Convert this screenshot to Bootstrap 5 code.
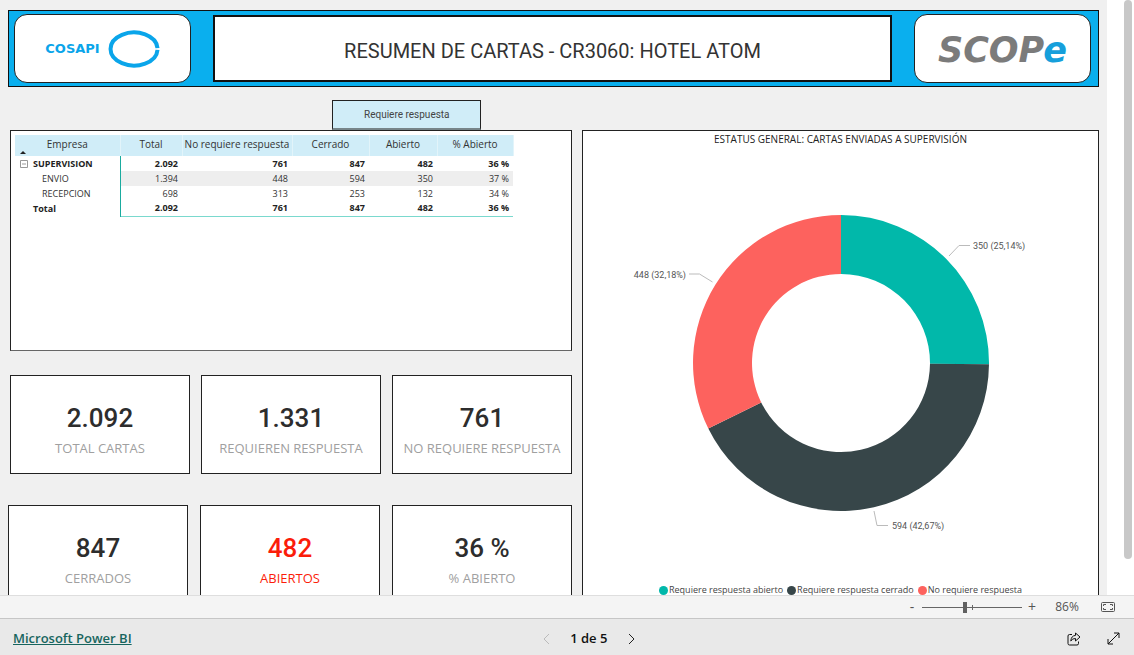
<!DOCTYPE html>
<html lang="es">
<head>
<meta charset="utf-8">
<meta name="viewport" content="width=device-width, initial-scale=1">
<title>Resumen de cartas</title>
<link href="https://cdn.jsdelivr.net/npm/bootstrap@5.3.0/dist/css/bootstrap.min.css" rel="stylesheet">
<style>
  :root { --din: Roboto, "Liberation Sans", sans-serif; --ui: "Open Sans", "Noto Sans", sans-serif; }
  body { font-family: var(--ui); color: #333; font-size: 14px; background: #fff; }
  .stage { min-height: 0; }
  .report { background: #f0f0f0; padding: 10px 8px 0; }
  .rail { width: 27px; padding-right: 2px; }
  .rail-thumb { width: 8px; height: 94%; background: #c8c8c8; border-radius: 4px; }
  .banner { background: #0aafee; border: 1px solid #111; height: 77px; padding: 3px 7px 3px 5px; gap: 22px; }
  .logo-box { width: 177px; background: #fff; border: 1px solid #222; border-radius: 13px; }
  .banner-title { border: 2px solid #111; background: #fff; margin: 1px 0; font: 400 20px/24px var(--din); padding-top: 4px; }
  .cosapi { font: 700 13px/16px "DejaVu Sans", sans-serif; color: #0aa5ea; }
  .scope { font: italic 700 35px/40px "DejaVu Sans", sans-serif; color: #7b7b7b; padding-top: 2px; }
  .scope span { color: #169fdb; }
  .board { display: grid; grid-template-columns: 564fr 517fr; column-gap: 10px; margin-top: 13px; }
  .inset { margin-left: 2px; }
  .btn-filter { width: 149px; height: 30px; margin-left: 57.5%; padding: 0; border: 1px solid #222; border-bottom: 2px solid #77858a; border-radius: 0; background: #d0edf8; font: 400 10px/28px var(--din); color: #444; }
  .btn-filter:hover { background: #bfe5f4; border-color: #222; }
  .panel { background: #fff; border: 1px solid #222; }
  .matrix-panel { height: 221px; padding: 4px; border-bottom-color: #666; }
  .matrix { width: 498px; table-layout: fixed; font-size: 9px; line-height: 14px; }
  .matrix th, .matrix td { height: 15px; padding: 0 4px 0 0; text-align: right; font-weight: 400; }
  .matrix thead th { background: #d0edf8; height: 21px; text-align: center; vertical-align: top; padding: 2px 0 0; font-size: 10px; border-right: 1px solid #e2f4fa; }
  .matrix thead th:first-child { position: relative; }
  .sort-mark { position: absolute; left: 5px; bottom: 2px; border: 3px solid transparent; border-top: 0; border-bottom-color: #222; }
  .matrix tbody th { text-align: left; padding-left: 27px; border-right: 1px solid #1aab9f; }
  .matrix .strong-row th, .matrix .strong-row td { font-weight: 700; color: #222; }
  .matrix .strong-row th { padding-left: 18px; }
  .matrix tbody .group-row th { padding-left: 5px; }
  .matrix .alt-row td { background: #eee; }
  .matrix tbody tr:last-child td { border-bottom: 1px solid #7ad9ce; }
  .toggle { display: inline-flex; width: 13px; padding: 0; border: 0; background: none; vertical-align: -1px; }
  .kpis { display: grid; grid-template-columns: repeat(3, 1fr); }
  .kpis-top { gap: 11px; margin-top: 24px; }
  .kpis-low { gap: 12px; margin-top: 31px; }
  .kpi { height: 99px; padding-top: 27px; text-align: center; white-space: nowrap; }
  .kpi-num { font: 500 26px/31px var(--din); color: #2d2d2d; }
  .kpi-label { font-size: 13px; line-height: 28px; color: #a0a0a0; }
  .kpi-alert * { color: #fb1d0a; }
  .chart-panel { margin-top: 30px; height: 480px; }
  .chart-title { font-size: 10px; line-height: 16px; color: #222; text-align: center; margin: 0; }
  .chart-panel svg { display: block; width: 100%; height: 434px; }
  .chart-panel text { font: 400 9px var(--din); fill: #555; }
  .legend-row { gap: 4px; font-size: 9px; line-height: 18px; color: #444; }
  .legend-row li { display: flex; align-items: center; gap: 1px; }
  .dot { width: 9px; height: 9px; border-radius: 50%; }
  .zoombar { height: 23px; background: #f4f4f4; border-top: 1px solid #dedede; padding-right: 19px; color: #555; }
  .plain { border: 0; background: none; padding: 0; color: inherit; display: inline-flex; justify-content: center; align-items: center; }
  .step { width: 14px; font-size: 14px; line-height: 16px; }
  .zoom-track { width: 100px; margin: 0 3px; position: relative; display: flex; }
  .zoom-track::after { content: ""; position: absolute; left: 50px; top: 6px; width: 1px; height: 5px; background: #666; }
  .zoom-track input { width: 100%; height: 16px; margin: 0; appearance: none; background: linear-gradient(#666, #666) center / 100% 1px no-repeat; }
  .zoom-track input::-webkit-slider-thumb { appearance: none; width: 4px; height: 11px; background: #606060; }
  .zoom-value { width: 34px; margin: 0 17px 0 11px; font-size: 12px; text-align: center; }
  .footer { height: 37px; background: #e9e9e9; border-top: 1px solid #c6c6c6; padding: 3px 0 0 13px; color: #111; }
  .footer a { color: #17655e; font-size: 13px; font-weight: 600; }
  .pager { gap: 18px; font-size: 13px; font-weight: 600; }
  .pager button { width: 12px; height: 24px; }
  .tools button { width: 40px; height: 32px; }
</style>
</head>
<body class="vh-100 d-flex flex-column overflow-hidden">
<main class="stage d-flex flex-fill overflow-hidden">
  <div class="report flex-fill overflow-hidden">
    <header class="banner d-flex">
      <div class="logo-box d-flex align-items-center justify-content-center gap-2">
        <span class="cosapi">COSAPI</span>
        <svg width="52" height="38" viewBox="0 0 52 38" fill="none" stroke="#0aa5ea" stroke-width="4" aria-hidden="true"><path d="M49.500 18.200A23.500 16.500 0 1 0 49.500 19.800"/></svg>
      </div>
      <h1 class="banner-title flex-fill d-flex align-items-center justify-content-center">RESUMEN DE CARTAS - CR3060: HOTEL ATOM</h1>
      <div class="logo-box d-flex align-items-center justify-content-center"><div class="scope">SCOP<span>e</span></div></div>
    </header>
    <div class="board">
      <section>
        <button class="btn btn-filter d-block" type="button">Requiere respuesta</button>
        <div class="panel matrix-panel inset">
          <table class="matrix">
            <colgroup><col style="width:105px"><col style="width:62px"><col style="width:110px"><col style="width:77px"><col style="width:68px"><col style="width:76px"></colgroup>
            <thead><tr><th scope="col">Empresa<span class="sort-mark"></span></th><th scope="col">Total</th><th scope="col">No requiere respuesta</th><th scope="col">Cerrado</th><th scope="col">Abierto</th><th scope="col">% Abierto</th></tr></thead>
            <tbody>
              <tr class="strong-row group-row"><th scope="row"><button class="toggle" type="button" aria-label="Contraer"><svg width="8" height="8" viewBox="0 0 8 8" fill="none" stroke="#999"><path d="M.5 .5h7v7h-7zM2 4h4"/></svg></button>SUPERVISION</th><td>2.092</td><td>761</td><td>847</td><td>482</td><td>36 %</td></tr>
              <tr class="alt-row"><th scope="row">ENVIO</th><td>1.394</td><td>448</td><td>594</td><td>350</td><td>37 %</td></tr>
              <tr><th scope="row">RECEPCION</th><td>698</td><td>313</td><td>253</td><td>132</td><td>34 %</td></tr>
              <tr class="strong-row"><th scope="row">Total</th><td>2.092</td><td>761</td><td>847</td><td>482</td><td>36 %</td></tr>
            </tbody>
          </table>
        </div>
        <div class="kpis kpis-top inset">
          <div class="panel kpi"><div class="kpi-num">2.092</div><div class="kpi-label">TOTAL CARTAS</div></div>
          <div class="panel kpi"><div class="kpi-num">1.331</div><div class="kpi-label">REQUIEREN RESPUESTA</div></div>
          <div class="panel kpi"><div class="kpi-num">761</div><div class="kpi-label">NO REQUIERE RESPUESTA</div></div>
        </div>
        <div class="kpis kpis-low">
          <div class="panel kpi"><div class="kpi-num">847</div><div class="kpi-label">CERRADOS</div></div>
          <div class="panel kpi kpi-alert"><div class="kpi-num">482</div><div class="kpi-label">ABIERTOS</div></div>
          <div class="panel kpi"><div class="kpi-num">36 %</div><div class="kpi-label">% ABIERTO</div></div>
        </div>
      </section>
      <section class="panel chart-panel">
        <h2 class="chart-title">ESTATUS GENERAL: CARTAS ENVIADAS A SUPERVISIÓN</h2>
        <!-- ring: outer radius 148, inner radius 89, centred on 258,216 -->
        <svg viewBox="0 0 515 434" role="img" aria-label="Estatus general">
          <path fill="#01b8aa" d="M258 68A148 148 0 0 1 406 217.300L347 216.800A89 89 0 0 0 258 127Z"/>
          <path fill="#374649" d="M406 217.300A148 148 0 0 1 125.300 281.500L178.200 255.400A89 89 0 0 0 347 216.800Z"/>
          <path fill="#fd625e" d="M125.300 281.500A148 148 0 0 1 258 68V127A89 89 0 0 0 178.200 255.400Z"/>
          <path fill="none" stroke="#bbb" d="M366 109l10-10.500h11M129.500 135l-13-8H106M291 364l3 14.500h11"/>
          <text x="390" y="102">350 (25,14%)</text>
          <text x="103" y="131" text-anchor="end">448 (32,18%)</text>
          <text x="309" y="382">594 (42,67%)</text>
        </svg>
        <ul class="legend-row list-unstyled d-flex justify-content-center m-0">
          <li><span class="dot" style="background:#01b8aa"></span>Requiere respuesta abierto</li>
          <li><span class="dot" style="background:#374649"></span>Requiere respuesta cerrado</li>
          <li><span class="dot" style="background:#fd625e"></span>No requiere respuesta</li>
        </ul>
      </section>
    </div>
  </div>
  <div class="rail d-flex justify-content-end flex-shrink-0"><div class="rail-thumb"></div></div>
</main>
<div class="zoombar d-flex align-items-center justify-content-end flex-shrink-0">
  <button class="plain step" type="button" aria-label="Alejar">-</button>
  <div class="zoom-track"><input type="range" min="0" max="100" value="43" aria-label="Zoom"></div>
  <button class="plain step" type="button" aria-label="Acercar">+</button>
  <span class="zoom-value">86%</span>
  <button class="plain" type="button" aria-label="Ajustar a la página"><svg width="14" height="10" viewBox="0 0 14 10" fill="none" stroke="#555"><rect x=".5" y=".5" width="13" height="9" rx="1"/><path d="M5 2.500H2.500V4M9 2.500h2.500V4M5 7.500H2.500V6M9 7.500h2.500V6"/></svg></button>
</div>
<footer class="footer d-flex align-items-center justify-content-between flex-shrink-0">
  <a href="#">Microsoft Power BI</a>
  <nav class="pager d-flex align-items-center" aria-label="Páginas">
    <button class="plain" type="button" aria-label="Anterior" disabled><svg width="7" height="12" viewBox="0 0 7 12" fill="none" stroke="#bbb"><path d="M6 1L1 6l5 5"/></svg></button>
    <span>1 de 5</span>
    <button class="plain" type="button" aria-label="Siguiente"><svg width="7" height="12" viewBox="0 0 7 12" fill="none" stroke="#222"><path d="M1 1l5 5-5 5"/></svg></button>
  </nav>
  <div class="tools d-flex ps-2">
    <button class="plain" type="button" aria-label="Compartir"><svg width="14" height="14" viewBox="0 0 14 14" fill="none" stroke="#111" stroke-linejoin="round"><path d="M5 2.500H2.500a1.500 1.500 0 0 0-1.500 1.500V11.500A1.500 1.500 0 0 0 2.500 13H10a1.500 1.500 0 0 0 1.500-1.500V9.500"/><path d="M8.500 1l4.500 4-4.500 4V6.500Q5.500 6.300 3.800 9 4.200 3.700 8.500 3.400z"/></svg></button>
    <button class="plain" type="button" aria-label="Pantalla completa"><svg width="13" height="13" viewBox="0 0 13 13" fill="none" stroke="#111"><path d="M1 12L12 1M7 1h5v5M1 7v5h5"/></svg></button>
  </div>
</footer>
<script src="https://cdn.jsdelivr.net/npm/bootstrap@5.3.0/dist/js/bootstrap.bundle.min.js"></script>
</body>
</html>
